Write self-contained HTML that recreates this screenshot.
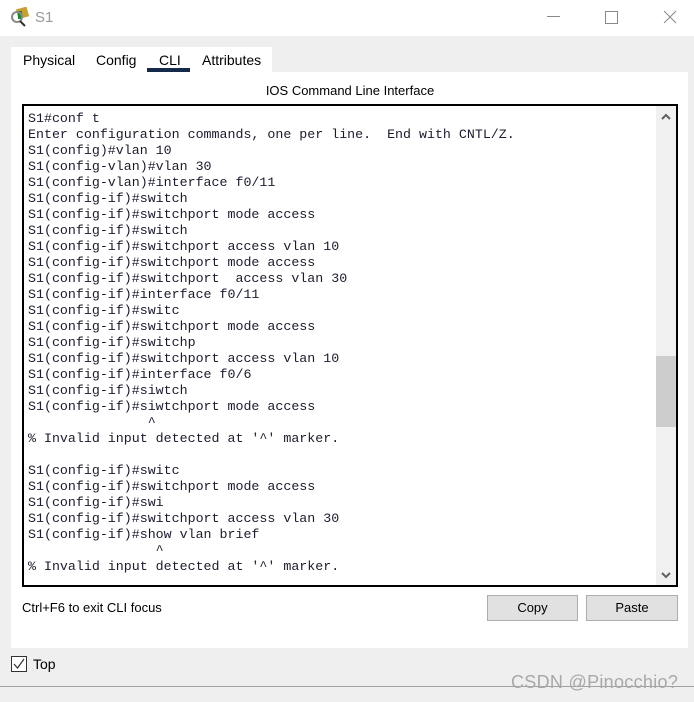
<!DOCTYPE html>
<html><head><style>
body{margin:0;width:694px;height:702px;background:#efefef;position:relative;overflow:hidden;font-family:"Liberation Sans",sans-serif;}
.abs{position:absolute}
#title{left:0;top:0;width:694px;height:36px;background:#fff}
#term{left:22px;top:104px;width:652px;height:479px;border:2px solid #000;background:#fff;overflow:hidden}
pre{margin:0;position:absolute;left:4px;top:5px;font-family:"Liberation Mono",monospace;font-size:13.3px;line-height:16px;color:#1b1b2e}
.btn{background:#e1e1e1;border:1px solid #adadad;height:24px;font-size:13px;text-align:center;line-height:24px;color:#000}
</style></head><body>
<div id="title" class="abs">
<svg class="abs" style="left:9px;top:7px" width="22" height="20"><rect x="8" y="1" width="11" height="10" fill="#c8a030" transform="rotate(-15 13 6)"/><rect x="9" y="4" width="4" height="8" fill="#1a8a2a"/><circle cx="8" cy="10" r="5" fill="none" stroke="#888" stroke-width="2"/><line x1="11" y1="14" x2="16" y2="19" stroke="#333" stroke-width="2"/></svg>
<div class="abs" style="left:35px;top:9px;font-size:15px;color:#999">S1</div>
<div class="abs" style="left:547px;top:16px;width:13px;height:1px;background:#888"></div>
<div class="abs" style="left:605px;top:11px;width:11px;height:11px;border:1px solid #888"></div>
<svg class="abs" style="left:663px;top:10px" width="14" height="14"><path d="M1 1L13 13M13 1L1 13" stroke="#888" stroke-width="1"/></svg>
</div>
<div class="abs" style="left:11px;top:47px;width:261px;height:26px;background:#fff"></div>
<div class="abs" style="left:11px;top:72px;width:677px;height:576px;background:#fff"></div>
<div class="abs" style="left:23px;top:52px;font-size:14px">Physical</div>
<div class="abs" style="left:96px;top:52px;font-size:14px">Config</div>
<div class="abs" style="left:159px;top:52px;font-size:14px">CLI</div>
<div class="abs" style="left:147px;top:68px;width:43px;height:4px;background:#15294a"></div>
<div class="abs" style="left:202px;top:52px;font-size:14px">Attributes</div>
<div class="abs" style="left:0;top:83px;width:700px;text-align:center;font-size:13px">IOS Command Line Interface</div>
<div id="term" class="abs">
<pre>S1#conf t
Enter configuration commands, one per line.  End with CNTL/Z.
S1(config)#vlan 10
S1(config-vlan)#vlan 30
S1(config-vlan)#interface f0/11
S1(config-if)#switch
S1(config-if)#switchport mode access
S1(config-if)#switch
S1(config-if)#switchport access vlan 10
S1(config-if)#switchport mode access
S1(config-if)#switchport  access vlan 30
S1(config-if)#interface f0/11
S1(config-if)#switc
S1(config-if)#switchport mode access
S1(config-if)#switchp
S1(config-if)#switchport access vlan 10
S1(config-if)#interface f0/6
S1(config-if)#siwtch
S1(config-if)#siwtchport mode access
               ^
% Invalid input detected at '^' marker.

S1(config-if)#switc
S1(config-if)#switchport mode access
S1(config-if)#swi
S1(config-if)#switchport access vlan 30
S1(config-if)#show vlan brief
                ^
% Invalid input detected at '^' marker.</pre>
<div class="abs" style="left:632px;top:0;width:20px;height:479px;background:#f0f0f0"></div>
<div class="abs" style="left:632px;top:250px;width:20px;height:71px;background:#cdcdcd"></div>
<svg class="abs" style="left:636px;top:6px" width="12" height="10"><path d="M2 7L6 3L10 7" stroke="#606060" stroke-width="2" fill="none"/></svg>
<svg class="abs" style="left:636px;top:464px" width="12" height="10"><path d="M2 3L6 7L10 3" stroke="#606060" stroke-width="2" fill="none"/></svg>
</div>
<div class="abs" style="left:22px;top:600px;font-size:13px;color:#000">Ctrl+F6 to exit CLI focus</div>
<div class="abs btn" style="left:487px;top:595px;width:89px">Copy</div>
<div class="abs btn" style="left:586px;top:595px;width:90px">Paste</div>
<div class="abs" style="left:11px;top:656px;width:14px;height:14px;border:1px solid #333;background:#fff"></div>
<svg class="abs" style="left:11px;top:656px" width="16" height="16"><path d="M3 8L6.5 12L13 3" stroke="#333" stroke-width="1.2" fill="none"/></svg>
<div class="abs" style="left:33px;top:656px;font-size:14px">Top</div>
<div class="abs" style="left:0;top:686px;width:694px;height:1px;background:#a0a0a0"></div>
<div class="abs" style="left:511px;top:672px;font-size:18px;letter-spacing:0.3px;color:#a8a8a8">CSDN @Pinocchio?</div>
</body></html>
